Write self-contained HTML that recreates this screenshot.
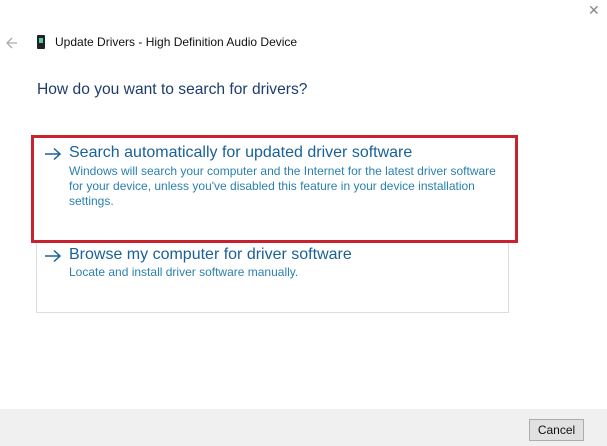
<!DOCTYPE html>
<html><head><style>
body{margin:0;width:607px;height:446px;background:#fff;font-family:"Liberation Sans",sans-serif;position:relative;overflow:hidden}
.a{position:absolute;white-space:nowrap}
</style></head><body>
<div class="a" style="left:588px;top:2px;color:#888;font-size:14px">✕</div>
<svg class="a" style="left:6px;top:37px" width="12" height="12"><path d="M11 6H1M6 1L1 6l5 5" stroke="#aaa" stroke-width="1.3" fill="none"/></svg>
<div class="a" style="left:37px;top:35px;width:8px;height:14px;background:#222;border-radius:1px"></div>
<div class="a" style="left:39px;top:38px;width:4px;height:5px;background:#5c9"></div>
<div class="a" style="left:55px;top:35px;font-size:12px;color:#111">Update Drivers - High Definition Audio Device</div>
<div class="a" style="left:37px;top:81px;font-size:15.6px;color:#1d3c6e">How do you want to search for drivers?</div>
<div class="a" style="left:36px;top:234px;width:471px;height:77px;border:1px solid #ddd"></div>
<div class="a" style="left:31px;top:135px;width:481px;height:102px;border:3px solid #c9222f;background:#fff"></div>
<svg class="a" style="left:44px;top:147px" width="18" height="14"><path d="M1 7h15M10 1.5L16 7l-6 5.5" stroke="#1a6198" stroke-width="1.5" fill="none"/></svg>
<div class="a" style="left:69px;top:144px;font-size:16px;color:#1a6198">Search automatically for updated driver software</div>
<div class="a" style="left:69px;top:164px;font-size:12px;line-height:15px;color:#2a80b0">Windows will search your computer and the Internet for the latest driver software<br>for your device, unless you've disabled this feature in your device installation<br>settings.</div>
<svg class="a" style="left:44px;top:249px" width="18" height="14"><path d="M1 7h15M10 1.5L16 7l-6 5.5" stroke="#1a6198" stroke-width="1.5" fill="none"/></svg>
<div class="a" style="left:69px;top:246px;font-size:16px;color:#1a6198">Browse my computer for driver software</div>
<div class="a" style="left:69px;top:265px;font-size:12px;color:#2a80b0">Locate and install driver software manually.</div>
<div class="a" style="left:0;top:409px;width:607px;height:37px;background:#f0f0f0"></div>
<div class="a" style="left:529px;top:419px;width:53px;height:20px;border:1px solid #adadad;background:#e1e1e1;font-size:12px;line-height:20px;text-align:center;color:#111">Cancel</div>
</body></html>
